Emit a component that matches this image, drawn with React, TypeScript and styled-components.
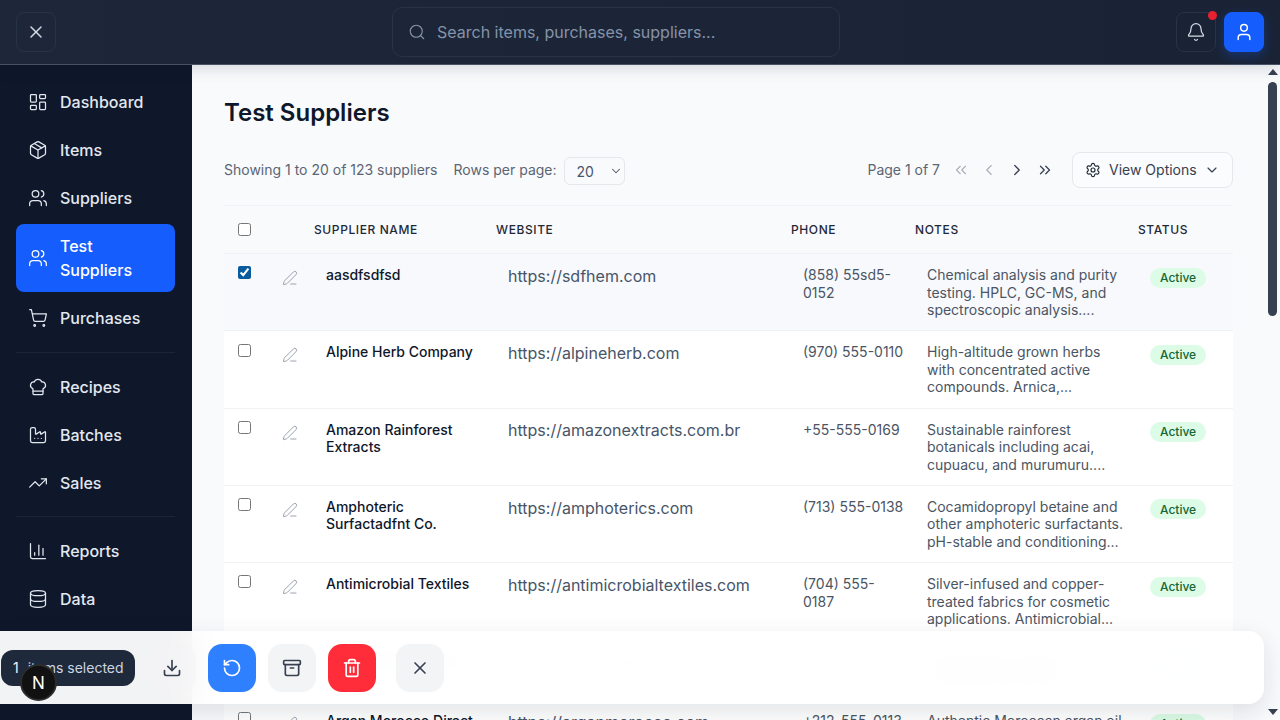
import React, { FC } from "react";
import styled, { createGlobalStyle } from "styled-components";
import {
	Archive,
	BarChart3,
	Bell,
	ChefHat,
	ChevronDown,
	ChevronLeft,
	ChevronRight,
	ChevronsLeft,
	ChevronsRight,
	Database,
	Download,
	Factory,
	LayoutDashboard,
	Package,
	PenLine,
	RotateCcw,
	Search,
	Settings,
	ShoppingCart,
	Trash2,
	TrendingUp,
	User,
	Users,
	X,
} from "lucide-react";

const GlobalStyle = createGlobalStyle`
	html, body {
		margin: 0;
		height: 100%;
		overflow: hidden;
		background: #f9fafb;
		font-family: Inter, "Liberation Sans", sans-serif;
	}
	* {
		box-sizing: border-box;
	}
`;

const Page = styled.div`
	display: flex;
	flex-direction: column;
	height: 720px;
	overflow: hidden;
`;

const TopBar = styled.header`
	position: relative;
	z-index: 2;
	display: flex;
	align-items: center;
	justify-content: space-between;
	flex: 0 0 65px;
	padding: 0 16px;
	background: linear-gradient(to right, #1d2739, #1a2335);
	border-bottom: 1px solid #475264;
	box-shadow: 0 4px 14px rgba(15, 23, 42, 0.14);
`;

const HeaderButton = styled.button<{ $primary?: boolean }>`
	position: relative;
	display: flex;
	align-items: center;
	justify-content: center;
	width: 40px;
	height: 40px;
	padding: 0;
	border-radius: 8px;
	border: 1px solid ${(p) => (p.$primary ? "#155dfc" : "#273347")};
	background: ${(p) => (p.$primary ? "#155dfc" : "transparent")};
	box-shadow: ${(p) => (p.$primary ? "0 4px 12px rgba(21, 93, 252, 0.3)" : "none")};
	color: ${(p) => (p.$primary ? "#ffffff" : "#d5dbe5")};
`;

const SearchBox = styled.div`
	display: flex;
	align-items: center;
	gap: 11px;
	width: 448px;
	height: 50px;
	padding: 0 15px;
	border: 1px solid #273347;
	border-radius: 10px;
	color: #8593a9;
	font-size: 16px;
`;

const HeaderActions = styled.div`
	display: flex;
	gap: 8px;
`;

const NotificationDot = styled.span`
	position: absolute;
	top: -2px;
	right: -2px;
	width: 9px;
	height: 9px;
	border-radius: 50%;
	background: #e7212f;
`;

const Body = styled.div`
	display: flex;
	flex: 1;
	min-height: 0;
`;

const Sidebar = styled.nav`
	flex: 0 0 192px;
	padding: 15px 17px 0 16px;
	background: #0f172a;
`;

const NavGroup = styled.div`
	display: flex;
	flex-direction: column;
	gap: 4px;
`;

const NavDivider = styled.div<{ $top?: number }>`
	height: 1px;
	margin: ${(p) => p.$top ?? 12}px 0 12px;
	background: #1b2537;
`;

const NavItem = styled.a<{ $active?: boolean }>`
	display: flex;
	align-items: center;
	gap: 12px;
	padding: 10px 12px;
	border-radius: 8px;
	background: ${(p) => (p.$active ? "#155dfc" : "transparent")};
	color: ${(p) => (p.$active ? "#ffffff" : "#e2e8f0")};
	font-size: 16px;
	font-weight: 500;
	line-height: 24px;

	svg {
		flex: 0 0 20px;
	}
`;

const Main = styled.main`
	flex: 1;
	min-width: 0;
	overflow: hidden;
	padding: 32px 32px 0;
	background: #f9fafc;
`;

const Title = styled.h1`
	margin: 0 0 23px;
	color: #0f172a;
	font-size: 24px;
	font-weight: 600;
	line-height: 32px;
`;

const Toolbar = styled.div`
	display: flex;
	align-items: center;
	justify-content: space-between;
	height: 36px;
	margin-bottom: 17px;
`;

const ToolbarGroup = styled.div`
	display: flex;
	align-items: center;
`;

const MutedText = styled.span<{ $gap?: number }>`
	margin-right: ${(p) => p.$gap ?? 0}px;
	color: #5b6574;
	font-size: 14px;
	line-height: 20px;
`;

const SelectWrap = styled.div`
	position: relative;
	display: flex;
	margin: 2px 0 0 -1px;

	svg {
		position: absolute;
		top: 7px;
		right: 2px;
		color: #4b5563;
		pointer-events: none;
	}
`;

const RowsSelect = styled.select`
	appearance: none;
	width: 61px;
	height: 28px;
	padding: 0 0 0 12px;
	border: 1px solid #e5e7eb;
	border-radius: 6px;
	background: #f9fafc;
	color: #475569;
	font-family: inherit;
	font-size: 14px;
`;

const PageButton = styled.span<{ $disabled?: boolean }>`
	display: flex;
	align-items: center;
	justify-content: center;
	width: 28px;
	color: ${(p) => (p.$disabled ? "#a8aeb8" : "#374151")};
`;

const ViewOptions = styled.button`
	display: flex;
	align-items: center;
	width: 161px;
	height: 36px;
	margin-left: 13px;
	padding: 0 12px;
	border: 1px solid #e5e7eb;
	border-radius: 8px;
	background: #fbfcfd;
	color: #374151;
	font-family: inherit;
	font-size: 14px;
	line-height: 20px;

	span {
		flex: 1;
		margin-left: 8px;
		text-align: left;
	}
`;

const Table = styled.table`
	width: 100%;
	table-layout: fixed;
	border-collapse: collapse;
	border-top: 1px solid #f0f2f5;
`;

const HeadCell = styled.th`
	height: 48px;
	padding: 0;
	border-bottom: 1px solid #f0f2f5;
	color: #1f2937;
	font-size: 12px;
	font-weight: 500;
	letter-spacing: 0.05em;
	text-align: left;
	text-transform: uppercase;
`;

const CheckHolder = styled.div`
	display: flex;
	padding-left: 14px;
`;

const EditHolder = styled.div`
	display: flex;
	padding-left: 15px;
`;

const Check = styled.input`
	width: 13px;
	height: 13px;
	margin: 0;
	accent-color: #0a5a9e;
`;

const Row = styled.tr<{ $selected?: boolean }>`
	background: ${(p) => (p.$selected ? "#f7f9fc" : "#ffffff")};
	border-bottom: 1px solid #f0f2f5;
`;

const Cell = styled.td`
	padding: 12px 12px 11.75px;
	vertical-align: top;
	color: #4b5563;
	font-size: 14px;
	line-height: 17.5px;
`;

const CheckCell = styled(Cell)`
	padding: 12.25px 0 0;
`;

const EditCell = styled(Cell)`
	padding: 16px 0 0;
	color: #9ca3af;
`;

const NameCell = styled(Cell)`
	color: #0f172a;
	font-weight: 500;
`;

const SiteCell = styled(Cell)`
	padding-top: 11.75px;
	color: #475569;
	font-size: 16px;
	line-height: 20px;
`;

const PhoneCell = styled(Cell)`
	padding-right: 10px;
`;

const StatusBadge = styled.span`
	display: inline-flex;
	align-items: center;
	height: 20px;
	margin-top: 1.5px;
	padding: 0 10px;
	border-radius: 10px;
	background: #dcfce7;
	color: #166534;
	font-size: 12px;
	font-weight: 500;
`;

const ScrollTrack = styled.div`
	display: flex;
	flex: 0 0 15px;
	flex-direction: column;
	align-items: center;
	padding-top: 4px;
	background: #f9fafc;
`;

const ArrowUp = styled.div`
	width: 0;
	height: 0;
	border-left: 5px solid transparent;
	border-right: 5px solid transparent;
	border-bottom: 6px solid #374151;
`;

const ArrowDown = styled.div`
	width: 0;
	height: 0;
	margin-top: 393px;
	border-left: 5px solid transparent;
	border-right: 5px solid transparent;
	border-top: 6px solid #374151;
`;

const ScrollThumb = styled.div`
	width: 9px;
	height: 234px;
	margin-top: 7px;
	border-radius: 5px;
	background: #374151;
`;

const BulkBar = styled.div`
	position: fixed;
	z-index: 3;
	left: -16px;
	right: 16px;
	bottom: 16px;
	display: flex;
	align-items: center;
	gap: 12px;
	height: 73px;
	padding: 0 17px;
	border-radius: 16px;
	background: rgba(255, 255, 255, 0.95);
	backdrop-filter: blur(16px);
	box-shadow: 0 8px 24px rgba(15, 23, 42, 0.12);
`;

const SelectedPill = styled.div`
	display: flex;
	align-items: center;
	width: 134px;
	height: 36px;
	margin-right: 1px;
	padding: 0 12px;
	border-radius: 12px;
	background: #1e293b;
	color: #cbd5e1;
	font-size: 14px;
	white-space: nowrap;
`;

const SelectedCount = styled.span`
	margin-right: 9px;
	color: #f1f5f9;
`;

const BulkButton = styled.button<{ $tone?: "blue" | "red" | "faded"; $push?: boolean }>`
	display: flex;
	align-items: center;
	justify-content: center;
	width: 48px;
	height: 48px;
	margin-left: ${(p) => (p.$push ? 8 : 0)}px;
	padding: 0;
	border: none;
	border-radius: 14px;
	background: ${(p) =>
		p.$tone === "blue"
			? "#2f80ff"
			: p.$tone === "red"
				? "#ff2d3a"
				: p.$tone === "faded"
					? "rgba(243, 244, 246, 0.5)"
					: "#f3f4f6"};
	color: ${(p) => (p.$tone === "blue" || p.$tone === "red" ? "#ffffff" : "#374151")};
`;

const DevBadge = styled.div`
	position: fixed;
	z-index: 4;
	left: 20px;
	bottom: 19px;
	display: flex;
	align-items: center;
	justify-content: center;
	width: 37px;
	height: 37px;
	border: 2px solid #2c2c2c;
	border-radius: 50%;
	background: #111111;
	color: #ffffff;
	font-size: 17px;
`;

const suppliers = [
	{
		name: "aasdfsdfsd",
		site: "https://sdfhem.com",
		phone: "(858) 55sd5-0152",
		notes: "Chemical analysis and purity testing. HPLC, GC-MS, and spectroscopic analysis....",
		selected: true,
	},
	{
		name: "Alpine Herb Company",
		site: "https://alpineherb.com",
		phone: "(970) 555-0110",
		notes: "High-altitude grown herbs with concentrated active compounds. Arnica,...",
	},
	{
		name: "Amazon Rainforest Extracts",
		site: "https://amazonextracts.com.br",
		phone: "+55-555-0169",
		notes: "Sustainable rainforest botanicals including acai, cupuacu, and murumuru....",
	},
	{
		name: "Amphoteric Surfactadfnt Co.",
		site: "https://amphoterics.com",
		phone: "(713) 555-0138",
		notes: "Cocamidopropyl betaine and other amphoteric surfactants. pH-stable and conditioning...",
	},
	{
		name: "Antimicrobial Textiles",
		site: "https://antimicrobialtextiles.com",
		phone: "(704) 555-0187",
		notes: "Silver-infused and copper-treated fabrics for cosmetic applications. Antimicrobial...",
	},
	{
		name: "Aqua Pure Botanicals",
		site: "https://aquapurebotanicals.com",
		phone: "(503) 555-0121",
		notes: "Purified floral waters and hydrosols for toners.",
	},
	{
		name: "Argan Morocco Direct",
		site: "https://arganmorocco.com",
		phone: "+212-555-0113",
		notes: "Authentic Moroccan argan oil direct from women's cooperatives.",
	},
];

const columnWidths = [43, 47, 182, 295, 124, 223, 95];

const App: FC = () => {
	return (
		<Page>
			<GlobalStyle />
			<TopBar>
				<HeaderButton>
					<X size={20} strokeWidth={1.75} />
				</HeaderButton>
				<SearchBox>
					<Search size={18} strokeWidth={1.5} />
					Search items, purchases, suppliers...
				</SearchBox>
				<HeaderActions>
					<HeaderButton>
						<Bell size={20} strokeWidth={1.5} />
						<NotificationDot />
					</HeaderButton>
					<HeaderButton $primary>
						<User size={20} strokeWidth={1.75} />
					</HeaderButton>
				</HeaderActions>
			</TopBar>
			<Body>
				<Sidebar>
					<NavGroup>
						<NavItem><LayoutDashboard size={20} strokeWidth={1.5} />Dashboard</NavItem>
						<NavItem><Package size={20} strokeWidth={1.5} />Items</NavItem>
						<NavItem><Users size={20} strokeWidth={1.5} />Suppliers</NavItem>
						<NavItem $active><Users size={20} strokeWidth={1.5} />Test Suppliers</NavItem>
						<NavItem><ShoppingCart size={20} strokeWidth={1.5} />Purchases</NavItem>
					</NavGroup>
					<NavDivider />
					<NavGroup>
						<NavItem><ChefHat size={20} strokeWidth={1.5} />Recipes</NavItem>
						<NavItem><Factory size={20} strokeWidth={1.5} />Batches</NavItem>
						<NavItem><TrendingUp size={20} strokeWidth={1.5} />Sales</NavItem>
					</NavGroup>
					<NavDivider $top={11} />
					<NavGroup>
						<NavItem><BarChart3 size={20} strokeWidth={1.5} />Reports</NavItem>
						<NavItem><Database size={20} strokeWidth={1.5} />Data</NavItem>
					</NavGroup>
				</Sidebar>
				<Main>
					<Title>Test Suppliers</Title>
					<Toolbar>
						<ToolbarGroup>
							<MutedText $gap={16}>Showing 1 to 20 of 123 suppliers</MutedText>
							<MutedText $gap={8}>Rows per page:</MutedText>
							<SelectWrap>
								<RowsSelect defaultValue="20">
									<option>10</option>
									<option>20</option>
									<option>50</option>
								</RowsSelect>
								<ChevronDown size={14} strokeWidth={1.75} />
							</SelectWrap>
						</ToolbarGroup>
						<ToolbarGroup>
							<MutedText $gap={7}>Page 1 of 7</MutedText>
							<PageButton $disabled><ChevronsLeft size={18} strokeWidth={1.5} /></PageButton>
							<PageButton $disabled><ChevronLeft size={18} strokeWidth={1.5} /></PageButton>
							<PageButton><ChevronRight size={18} strokeWidth={1.75} /></PageButton>
							<PageButton><ChevronsRight size={18} strokeWidth={1.75} /></PageButton>
							<ViewOptions>
								<Settings size={16} strokeWidth={1.75} color="#1f2937" />
								<span>View Options</span>
								<ChevronDown size={16} strokeWidth={1.75} />
							</ViewOptions>
						</ToolbarGroup>
					</Toolbar>
					<Table>
						<colgroup>
							{columnWidths.map((w, i) => (
								<col key={i} width={w} />
							))}
						</colgroup>
						<thead>
							<tr>
								<HeadCell>
									<CheckHolder><Check type="checkbox" /></CheckHolder>
								</HeadCell>
								<HeadCell />
								<HeadCell>Supplier Name</HeadCell>
								<HeadCell>Website</HeadCell>
								<HeadCell>Phone</HeadCell>
								<HeadCell>Notes</HeadCell>
								<HeadCell>Status</HeadCell>
							</tr>
						</thead>
						<tbody>
							{suppliers.map((s) => (
								<Row key={s.name} $selected={s.selected}>
									<CheckCell>
										<CheckHolder>
											<Check type="checkbox" defaultChecked={s.selected} />
										</CheckHolder>
									</CheckCell>
									<EditCell>
										<EditHolder><PenLine size={16} strokeWidth={1.5} /></EditHolder>
									</EditCell>
									<NameCell>{s.name}</NameCell>
									<SiteCell>{s.site}</SiteCell>
									<PhoneCell>{s.phone}</PhoneCell>
									<Cell>{s.notes}</Cell>
									<Cell><StatusBadge>Active</StatusBadge></Cell>
								</Row>
							))}
						</tbody>
					</Table>
				</Main>
				<ScrollTrack>
					<ArrowUp />
					<ScrollThumb />
					<ArrowDown />
				</ScrollTrack>
			</Body>
			<BulkBar>
				<SelectedPill>
					<SelectedCount>1</SelectedCount>
					items selected
				</SelectedPill>
				<BulkButton $tone="faded"><Download size={20} strokeWidth={2} /></BulkButton>
				<BulkButton $tone="blue"><RotateCcw size={20} strokeWidth={2} /></BulkButton>
				<BulkButton><Archive size={20} strokeWidth={2} /></BulkButton>
				<BulkButton $tone="red"><Trash2 size={20} strokeWidth={2} /></BulkButton>
				<BulkButton $push><X size={20} strokeWidth={2} /></BulkButton>
			</BulkBar>
			<DevBadge>N</DevBadge>
		</Page>
	);
};

export default App;
